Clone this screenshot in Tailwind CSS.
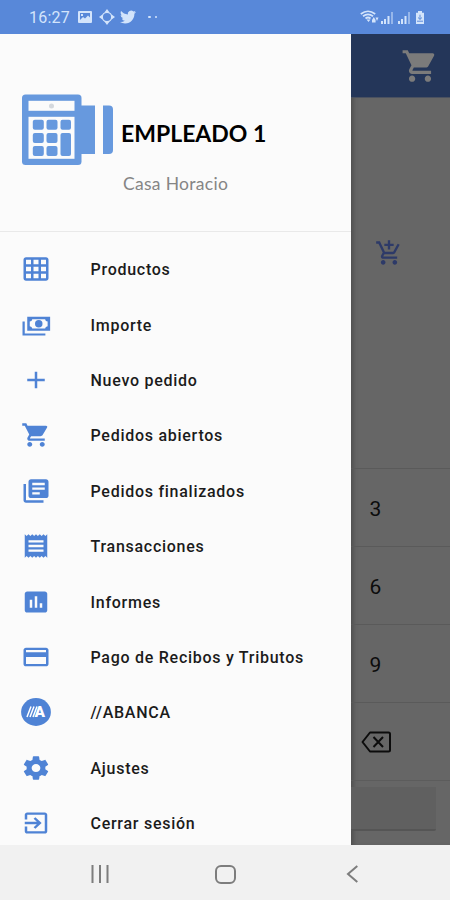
<!DOCTYPE html>
<html lang="es">
<head>
<meta charset="utf-8">
<meta name="viewport" content="width=device-width, initial-scale=1">
<title>Casa Horacio</title>
<script src="https://cdn.jsdelivr.net/npm/@tailwindcss/browser@4"></script>
</head>
<body class="bg-[#f1f1f1] font-[Roboto,sans-serif]">
<div class="flex flex-col w-[450px] h-[900px] overflow-hidden">
  <header class="h-[34px] shrink-0 bg-[#5888d9] flex items-center pl-[29px] pr-[25px] text-[#d3e4fb]">
    <span class="text-[16px] leading-none w-[42px] pt-[2px] tracking-[0.2px] whitespace-nowrap">16:27</span>
    <svg class="ml-[6px] w-4 h-[14px]" viewBox="0 0 16 14"><path fill="currentColor" fill-rule="evenodd" d="M2 1h12q1 0 1 1v10q0 1-1 1H2q-1 0-1-1V2q0-1 1-1zM3 3v7l3-3 2 1.500 3-3 2 2V3zM4 4h2v2H4z"/></svg>
    <svg class="ml-[6px] w-4 h-4" viewBox="0 0 16 16" fill="none" stroke="currentColor" stroke-width="1.300"><circle cx="8" cy="8" r="4.700"/><path fill="currentColor" stroke="none" d="M8 0l2.600 3.400H5.400zM8 16l2.600-3.400H5.400zM0 8l3.400-2.600v5.200zM16 8l-3.400-2.600v5.200z"/></svg>
    <svg class="ml-[5px] w-4 h-4" viewBox="0 0 24 24"><path fill="currentColor" d="M23.950 4.570a10 10 0 0 1-2.820.770 4.960 4.960 0 0 0 2.160-2.720c-.950.550-2 .950-3.130 1.180a4.920 4.920 0 0 0-8.380 4.480C7.690 8.090 4.070 6.130 1.640 3.160a4.820 4.820 0 0 0-.670 2.480c0 1.710.870 3.210 2.190 4.100a4.900 4.900 0 0 1-2.230-.620v.060a4.920 4.920 0 0 0 3.950 4.830 5 5 0 0 1-2.210.080 4.940 4.940 0 0 0 4.600 3.420A9.870 9.870 0 0 1 0 19.540a13.990 13.990 0 0 0 7.550 2.210c9.050 0 14-7.500 14-13.980 0-.210 0-.420-.020-.630a9.940 9.940 0 0 0 2.460-2.550z"/></svg>
    <span class="ml-3 flex gap-[4px]"><i class="size-[2.5px] bg-current rounded-full"></i><i class="size-[2.5px] bg-current rounded-full"></i></span>
    <span class="ml-auto flex items-center">
      <svg class="w-[19px] h-[14px]" viewBox="0 0 19 14" fill="none" stroke="currentColor" stroke-width="1.700"><path d="M.800 4Q8 -1.500 15.200 4M3 6.300q5-3.800 10 0M5.500 8.500q2.500-2 5 0"/><path fill="currentColor" stroke="none" d="M6.500 9.500h4l-2 2.500zM12 10l1.800-3 1.800 3v2.500H12zM15.500 7.500h3L17 11z"/></svg>
      <svg class="ml-[2px] w-3 h-[13px]" viewBox="0 0 12 13" fill="currentColor"><path d="M0 10h2v3H0zM3 8h2v5H3zM6.500 5h2v8h-2z"/><path opacity=".5" d="M10 1h2v12h-2z"/></svg>
      <svg class="ml-[5px] w-3 h-[13px]" viewBox="0 0 12 13" fill="currentColor"><path d="M0 10h2v3H0zM3 8h2v5H3zM6.500 5h2v8h-2z"/><path opacity=".5" d="M10 1h2v12h-2z"/></svg>
      <svg class="ml-[5px] w-[10px] h-[13px]" viewBox="0 0 10 14" preserveAspectRatio="none"><path fill="currentColor" d="M3 0h4v2h2v12H1V2h2z"/><path stroke="#5888d9" stroke-width="1" d="M5 4v5M3 7l2 2 2-2M2 11h6" fill="none"/></svg>
    </span>
  </header>

  <div class="flex h-[811px] shrink-0">
    <aside class="w-[350.5px] shrink-0 bg-[#fbfbfb] overflow-hidden flex flex-col">
      <div class="h-[198px] shrink-0 border-b border-[#e9e9e9] flex pl-[22px] pt-[60px]">
        <svg class="w-[92px] h-[72px] shrink-0" viewBox="0 0 92 72" fill="#6799de">
          <rect x="0" y="0.500" width="59.500" height="70.500" rx="3.500"/>
          <rect x="59" y="11.500" width="14" height="48.500"/>
          <path d="M81 11.500h6q4 0 4 4v40.500q0 4-4 4h-6z"/>
          <g fill="#fbfbfb"><rect x="6.500" y="6.800" width="46" height="10"/><rect x="6.500" y="22.800" width="46" height="42"/></g>
          <circle cx="29.500" cy="12" r="2.500" fill="#d4d8dd"/>
          <rect x="10.800" y="25.800" width="11" height="10" rx="2"/><rect x="24.500" y="25.800" width="11" height="10" rx="2"/><rect x="38.500" y="25.800" width="10.500" height="10" rx="2"/>
          <rect x="10.800" y="39" width="11" height="10" rx="2"/><rect x="24.500" y="39" width="11" height="10" rx="2"/><rect x="38.500" y="39" width="10.500" height="23" rx="2"/>
          <rect x="10.800" y="52" width="11" height="10" rx="2"/><rect x="24.500" y="52" width="11" height="10" rx="2"/>
        </svg>
        <div class="pl-[7px] pt-[27px] font-[Lato,sans-serif] whitespace-nowrap">
          <div class="text-[23px] leading-[24px] font-bold text-black w-max">EMPLEADO 1</div>
          <div class="pl-[2px] mt-[27px] text-[17.5px] leading-[24px] text-[#858585] tracking-[0.3px] w-max">Casa Horacio</div>
        </div>
      </div>
      <nav class="shrink-0 text-[#4f83d5]">
        <ul class="flex flex-col pt-[10px] [&>li]:h-[55.4px] [&>li]:flex [&>li]:items-center [&>li]:pl-[20.5px] [&_svg]:w-[30px] [&_svg]:h-[28px] [&_svg]:shrink-0 [&_svg]:-mt-px [&_span]:pt-px [&_span]:ml-10 [&_span]:text-[16px] [&_span]:font-medium [&_span]:tracking-[0.73px] [&_span]:text-[#1b1b1b] [&_span]:whitespace-nowrap">
          <li><svg viewBox="0 0 24 24" preserveAspectRatio="none" fill="currentColor"><path d="M20 2H4c-1.100 0-2 .900-2 2v16c0 1.100.900 2 2 2h16c1.100 0 2-.900 2-2V4c0-1.100-.900-2-2-2zM8 20H4v-4h4v4zm0-6H4v-4h4v4zm0-6H4V4h4v4zm6 12h-4v-4h4v4zm0-6h-4v-4h4v4zm0-6h-4V4h4v4zm6 12h-4v-4h4v4zm0-6h-4v-4h4v4zm0-6h-4V4h4v4z"/></svg><span>Productos</span></li>
          <li><svg viewBox="0 0 24 24" preserveAspectRatio="none" fill="currentColor"><path fill-rule="evenodd" d="M5 5h18.300v12H5zM9 7q-.200 1.800-2 2v4q1.800.200 2 2h10.300q.200-1.800 2-2V9q-1.800-.200-2-2zM14.200 7.800a3 3.200 0 1 1 0 6.400 3 3.200 0 0 1 0-6.400z"/><path d="M1.200 9H3v10.200h16.500V21H1.200z"/></svg><span>Importe</span></li>
          <li><svg viewBox="0 0 24 24" preserveAspectRatio="none" fill="currentColor"><path d="M19 13h-6v6h-2v-6H5v-2h6V5h2v6h6z"/></svg><span>Nuevo pedido</span></li>
          <li><svg viewBox="0 0 24 24" preserveAspectRatio="none" fill="currentColor"><path d="M7 18c-1.100 0-1.990.900-1.990 2S5.900 22 7 22s2-.900 2-2-.900-2-2-2zM1 2v2h2l3.600 7.590-1.350 2.450c-.160.280-.250.610-.250.960 0 1.100.900 2 2 2h12v-2H7.420c-.140 0-.250-.110-.250-.250l.030-.120.900-1.630h7.450c.750 0 1.410-.410 1.750-1.030l3.580-6.490A1 1 0 0 0 20 4H5.210l-.940-2H1zm16 16c-1.100 0-1.990.900-1.990 2s.890 2 1.990 2 2-.900 2-2-.900-2-2-2z"/></svg><span>Pedidos abiertos</span></li>
          <li><svg viewBox="0 0 24 24" preserveAspectRatio="none" fill="currentColor"><path d="M4 6H2v14c0 1.100.900 2 2 2h14v-2H4V6zm16-4H8c-1.100 0-2 .900-2 2v12c0 1.100.900 2 2 2h12c1.100 0 2-.900 2-2V4c0-1.100-.900-2-2-2zm-1 9H9V9h10v2zm-4 4H9v-2h6v2zm4-8H9V5h10v2z"/></svg><span>Pedidos finalizados</span></li>
          <li><svg viewBox="0 0 24 24" preserveAspectRatio="none" fill="currentColor"><path d="M18 17H6v-2h12v2zm0-4H6v-2h12v2zm0-4H6V7h12v2zM3 22l1.500-1.500L6 22l1.500-1.500L9 22l1.500-1.500L12 22l1.500-1.500L15 22l1.500-1.500L18 22l1.500-1.500L21 22V2l-1.500 1.500L18 2l-1.500 1.500L15 2l-1.500 1.500L12 2l-1.500 1.500L9 2 7.500 3.500 6 2 4.500 3.500 3 2v20z"/></svg><span>Transacciones</span></li>
          <li><svg viewBox="0 0 24 24" preserveAspectRatio="none" fill="currentColor"><path d="M19 3H5c-1.100 0-2 .900-2 2v14c0 1.100.900 2 2 2h14c1.100 0 2-.900 2-2V5c0-1.100-.900-2-2-2zM9 17H7v-7h2v7zm4 0h-2V7h2v10zm4 0h-2v-4h2v4z"/></svg><span>Informes</span></li>
          <li><svg viewBox="0 0 24 24" preserveAspectRatio="none" fill="currentColor"><path d="M20 4H4c-1.110 0-1.990.890-1.990 2L2 18c0 1.110.890 2 2 2h16c1.110 0 2-.890 2-2V6c0-1.110-.890-2-2-2zm0 14H4v-6h16v6zm0-10H4V6h16v2z"/></svg><span>Pago de Recibos y Tributos</span></li>
          <li><svg viewBox="0 0 30 28" fill="currentColor"><ellipse cx="15" cy="14" rx="14.900" ry="13.900"/><path stroke="#fff" stroke-width="1.500" d="M6 19l4-10.500M9 19l4-10.500M12 19l4-10.500"/><text x="13.500" y="19" font-family="Roboto" font-weight="900" font-size="14.500" fill="#fff" textLength="10.500" lengthAdjust="spacingAndGlyphs">A</text></svg><span>//ABANCA</span></li>
          <li><svg viewBox="0 0 24 24" preserveAspectRatio="none" fill="currentColor"><path d="M19.430 12.980c.040-.320.070-.640.070-.980s-.030-.660-.070-.980l2.110-1.650c.190-.150.240-.420.120-.640l-2-3.460c-.120-.220-.390-.300-.610-.220l-2.490 1c-.520-.400-1.080-.730-1.690-.980l-.380-2.650C14.460 2.180 14.250 2 14 2h-4c-.250 0-.460.180-.490.420l-.380 2.650c-.610.250-1.170.590-1.690.980l-2.490-1c-.230-.090-.490 0-.610.220l-2 3.460c-.130.220-.070.490.120.640l2.110 1.650c-.040.320-.070.650-.070.980s.030.660.070.980l-2.110 1.650c-.190.150-.240.420-.120.640l2 3.460c.120.220.390.300.610.220l2.490-1c.520.400 1.080.730 1.690.980l.380 2.650c.030.240.240.420.490.420h4c.250 0 .460-.180.490-.420l.380-2.650c.610-.250 1.170-.590 1.690-.980l2.490 1c.230.090.490 0 .610-.220l2-3.460c.120-.220.070-.490-.120-.640l-2.110-1.650zM12 15.500c-1.930 0-3.500-1.570-3.500-3.500s1.570-3.500 3.500-3.500 3.500 1.570 3.500 3.500-1.570 3.500-3.500 3.500z"/></svg><span>Ajustes</span></li>
          <li><svg viewBox="0 0 24 24" preserveAspectRatio="none" fill="currentColor"><path d="M10.090 15.590L11.500 17l5-5-5-5-1.410 1.410L12.670 11H3v2h9.670l-2.580 2.590zM19 3H5c-1.110 0-2 .900-2 2v4h2V5h14v14H5v-4H3v4c0 1.100.890 2 2 2h14c1.100 0 2-.900 2-2V5c0-1.100-.900-2-2-2z"/></svg><span>Cerrar sesión</span></li>
        </ul>
      </nav>
    </aside>

    <main class="flex-1 bg-[#666666] flex flex-col shadow-[inset_5px_0_5px_-3px_#4d4d4d]">
      <div class="h-[64px] shrink-0 bg-[#243659] border-b border-[#4a5160] flex justify-end items-center pr-[11px]">
        <svg class="w-[38px] h-[38px] text-[#7b7b7b]" viewBox="0 0 24 24" preserveAspectRatio="none" fill="currentColor"><path d="M7 18c-1.100 0-1.990.900-1.990 2S5.900 22 7 22s2-.900 2-2-.900-2-2-2zM1 2v2h2l3.600 7.590-1.350 2.450c-.160.280-.250.610-.250.960 0 1.100.900 2 2 2h12v-2H7.420c-.140 0-.250-.110-.250-.250l.030-.120.900-1.630h7.450c.750 0 1.410-.410 1.750-1.030l3.580-6.490A1 1 0 0 0 20 4H5.210l-.940-2H1zm16 16c-1.100 0-1.990.900-1.990 2s.890 2 1.990 2 2-.900 2-2-.900-2-2-2z"/></svg>
      </div>
      <div class="h-[370px] shrink-0 pt-[141px] pl-[24px]">
        <svg class="w-[28px] h-[28px] text-[#2d3a68]" viewBox="0 0 24 24" preserveAspectRatio="none" fill="currentColor"><path d="M11 9h2V6h3V4h-3V1h-2v3H8v2h3v3zm-4 9c-1.100 0-1.990.900-1.990 2S5.900 22 7 22s2-.900 2-2-.900-2-2-2zm10 0c-1.100 0-1.990.900-1.990 2s.890 2 1.990 2 2-.900 2-2-.900-2-2-2zm-9.830-3.250l.030-.120.900-1.630h7.450c.750 0 1.410-.410 1.750-1.030l3.860-7.010L19.420 4l-1.100 2-2.760 5H8.530l-.130-.270L6.160 6l-.950-2-.940-2H1v2h2l3.600 7.590-1.350 2.450c-.160.280-.250.610-.250.960 0 1.100.900 2 2 2h12v-2H7.420c-.130 0-.250-.110-.250-.250z"/></svg>
      </div>
      <div class="shrink-0 text-[21px] text-[#0c0c0c] [&>div]:h-[78px] [&>div]:border-t [&>div]:border-[#5a5a5a] [&>div]:flex [&>div]:items-center">
        <div class="pl-[19px] pt-[4px]">3</div>
        <div class="pl-[19px] pt-[4px]">6</div>
        <div class="pl-[19px] pt-[4px]">9</div>
        <div class="pl-[10px]"><svg class="w-[30px] h-[22px]" viewBox="0 0 30 22" fill="none" stroke="currentColor" stroke-width="2"><path d="M9 1.500h18.500q1.500 0 1.500 1.500v16q0 1.500-1.500 1.500H9L1.500 11z" stroke-linejoin="round"/><path d="M12.500 6l9.500 10M22 6l-9.500 10"/></svg></div>
      </div>
      <div class="flex-1 border-t border-[#5c5c5c] pt-[6px] pr-[14px]">
        <div class="h-[44px] bg-[#606060] border-b-2 border-[#555555] rounded-br-[2px]"></div>
      </div>
    </main>
  </div>

  <footer class="flex-1 bg-[#f1f1f1] flex items-center pt-[3px] text-[#7d7d7d]">
    <svg class="ml-[90px] w-5 h-[18px]" viewBox="0 0 20 18" stroke="currentColor" stroke-width="2"><path d="M2.500 0v18M10 0v18M17.500 0v18"/></svg>
    <svg class="ml-[105px] w-[21px] h-[19px]" viewBox="0 0 21 19" fill="none" stroke="currentColor" stroke-width="2"><rect x="1" y="1" width="19" height="17" rx="5"/></svg>
    <svg class="ml-[109.5px] w-3 h-[18px]" viewBox="0 0 12 18" fill="none" stroke="currentColor" stroke-width="2"><path d="M11.300 1L2 9l9.300 8"/></svg>
  </footer>
</div>
</body>
</html>
